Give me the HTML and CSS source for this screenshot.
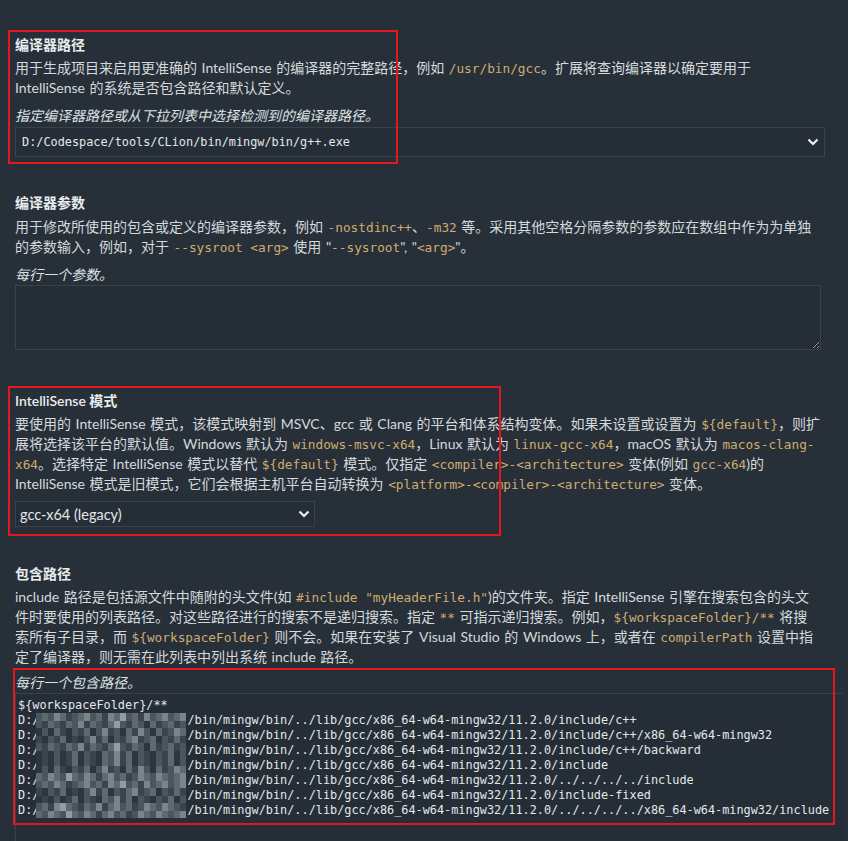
FILE: index.html
```html
<!DOCTYPE html>
<html lang="zh-CN">
<head>
<meta charset="utf-8">
<title>C/C++ 配置</title>
<link rel="stylesheet" href="styles.css">
</head>
<body>
<div class="page">
  <section class="item">
    <div class="title">编译器路径</div>
    <div class="desc">用于生成项目来启用更准确的 IntelliSense 的编译器的完整路径，例如 <code>/usr/bin/gcc</code>。扩展将查询编译器以确定要用于 IntelliSense 的系统是否包含路径和默认定义。</div>
    <div class="hint">指定编译器路径或从下拉列表中选择检测到的编译器路径。</div>
    <div class="select select-wide">
      <span class="mono">D:/Codespace/tools/CLion/bin/mingw/bin/g++.exe</span>
      <svg class="chev" width="12" height="8" viewBox="0 0 12 8"><polyline points="1.5,1.5 6,6 10.5,1.5" fill="none" stroke="#eef1f2" stroke-width="2.2"/></svg>
    </div>
  </section>

  <section class="item">
    <div class="title">编译器参数</div>
    <div class="desc">用于修改所使用的包含或定义的编译器参数，例如 <code>-nostdinc++</code>、<code>-m32</code> 等。采用其他空格分隔参数的参数应在数组中作为为单独的参数输入，例如，对于 <code>--sysroot &lt;arg&gt;</code> 使用 "<code>--sysroot</code>", "<code>&lt;arg&gt;</code>"。</div>
    <div class="hint">每行一个参数。</div>
    <textarea class="args"></textarea>
  </section>

  <section class="item item-after-area">
    <div class="title">IntelliSense 模式</div>
    <div class="desc">要使用的 IntelliSense 模式，该模式映射到 MSVC、gcc 或 Clang 的平台和体系结构变体。如果未设置或设置为 <code>${default}</code>，则扩展将选择该平台的默认值。Windows 默认为 <code>windows-msvc-x64</code>，Linux 默认为 <code>linux-gcc-x64</code>，macOS 默认为 <code>macos-clang-x64</code>。选择特定 IntelliSense 模式以替代 <code>${default}</code> 模式。仅指定 <code>&lt;compiler&gt;-&lt;architecture&gt;</code> 变体(例如 <code>gcc-x64</code>)的 IntelliSense 模式是旧模式，它们会根据主机平台自动转换为 <code>&lt;platform&gt;-&lt;compiler&gt;-&lt;architecture&gt;</code> 变体。</div>
    <div class="select select-small">
      <span>gcc-x64 (legacy)</span>
      <svg class="chev" width="12" height="8" viewBox="0 0 12 8"><polyline points="1.5,1.5 6,6 10.5,1.5" fill="none" stroke="#eef1f2" stroke-width="2.2"/></svg>
    </div>
  </section>

  <section class="item">
    <div class="title">包含路径</div>
    <div class="desc">include 路径是包括源文件中随附的头文件(如 <code>#include "myHeaderFile.h"</code>)的文件夹。指定 IntelliSense 引擎在搜索包含的头文件时要使用的列表路径。对这些路径进行的搜索不是递归搜索。指定 <code>**</code> 可指示递归搜索。例如，<code>${workspaceFolder}/**</code> 将搜索所有子目录，而 <code>${workspaceFolder}</code> 则不会。如果在安装了 Visual Studio 的 Windows 上，或者在 <code>compilerPath</code> 设置中指定了编译器，则无需在此列表中列出系统 include 路径。</div>
    <div class="hint hint-include">每行一个包含路径。</div>
    <div class="paths mono">
      <div class="line">${workspaceFolder}/**</div>
      <div class="line">D:/<span class="blur b1"></span>/bin/mingw/bin/../lib/gcc/x86_64-w64-mingw32/11.2.0/include/c++</div>
      <div class="line">D:/<span class="blur b2"></span>/bin/mingw/bin/../lib/gcc/x86_64-w64-mingw32/11.2.0/include/c++/x86_64-w64-mingw32</div>
      <div class="line">D:/<span class="blur b3"></span>/bin/mingw/bin/../lib/gcc/x86_64-w64-mingw32/11.2.0/include/c++/backward</div>
      <div class="line">D:/<span class="blur b4"></span>/bin/mingw/bin/../lib/gcc/x86_64-w64-mingw32/11.2.0/include</div>
      <div class="line">D:/<span class="blur b5"></span>/bin/mingw/bin/../lib/gcc/x86_64-w64-mingw32/11.2.0/../../../../include</div>
      <div class="line">D:/<span class="blur b6"></span>/bin/mingw/bin/../lib/gcc/x86_64-w64-mingw32/11.2.0/include-fixed</div>
      <div class="line">D:/<span class="blur b7"></span>/bin/mingw/bin/../lib/gcc/x86_64-w64-mingw32/11.2.0/../../../../x86_64-w64-mingw32/include</div>
    </div>
  </section>

  <div class="mark mark-1"></div>
  <div class="mark mark-3"></div>
  <div class="mark mark-4"></div>
</div>
</body>
</html>
```

FILE: styles.css
```css
:root {
  --p0: #2c363e;
  --p1: #3a444c;
  --p2: #4a555c;
  --p3: #5f6a70;
  --p4: #7a858b;
  --p5: #929ca1;
  --g1: linear-gradient(90deg, var(--p2) 0 6px, var(--p3) 6px 12px, var(--p2) 12px 18px, var(--p4) 18px 24px, var(--p3) 24px 30px, var(--p1) 30px 36px, var(--p2) 36px 42px, var(--p3) 42px 48px, var(--p4) 48px 54px, var(--p2) 54px 60px, var(--p3) 60px 66px, var(--p1) 66px 72px, var(--p4) 72px 78px, var(--p3) 78px 84px, var(--p5) 84px 90px, var(--p2) 90px 96px, var(--p3) 96px 102px, var(--p1) 102px 108px, var(--p4) 108px 114px, var(--p2) 114px 120px, var(--p3) 120px 126px, var(--p4) 126px 132px, var(--p2) 132px 138px, var(--p3) 138px 144px, var(--p4) 144px 150px);
  --g2: linear-gradient(90deg, var(--p0) 0 6px, var(--p2) 6px 12px, var(--p0) 12px 18px, var(--p3) 18px 24px, var(--p1) 24px 30px, var(--p0) 30px 36px, var(--p2) 36px 42px, var(--p1) 42px 48px, var(--p3) 48px 54px, var(--p0) 54px 60px, var(--p2) 60px 66px, var(--p4) 66px 72px, var(--p1) 72px 78px, var(--p2) 78px 84px, var(--p0) 84px 90px, var(--p3) 90px 96px, var(--p1) 96px 102px, var(--p4) 102px 108px, var(--p2) 108px 114px, var(--p0) 114px 120px, var(--p3) 120px 126px, var(--p1) 126px 132px, var(--p2) 132px 138px, var(--p4) 138px 144px, var(--p3) 144px 150px);
  --g3: linear-gradient(90deg, var(--p2) 0 6px, var(--p1) 6px 12px, var(--p3) 12px 18px, var(--p2) 18px 24px, var(--p1) 24px 30px, var(--p3) 30px 36px, var(--p2) 36px 42px, var(--p4) 42px 48px, var(--p1) 48px 54px, var(--p3) 54px 60px, var(--p2) 60px 66px, var(--p1) 66px 72px, var(--p3) 72px 78px, var(--p5) 78px 84px, var(--p2) 84px 90px, var(--p1) 90px 96px, var(--p3) 96px 102px, var(--p2) 102px 108px, var(--p0) 108px 114px, var(--p3) 114px 120px, var(--p1) 120px 126px, var(--p2) 126px 132px, var(--p3) 132px 138px, var(--p1) 138px 144px, var(--p2) 144px 150px);
  --g4: linear-gradient(90deg, var(--p0) 0 6px, var(--p1) 6px 12px, var(--p0) 12px 18px, var(--p2) 18px 24px, var(--p0) 24px 30px, var(--p1) 30px 36px, var(--p3) 36px 42px, var(--p0) 42px 48px, var(--p2) 48px 54px, var(--p1) 54px 60px, var(--p0) 60px 66px, var(--p3) 66px 72px, var(--p2) 72px 78px, var(--p4) 78px 84px, var(--p1) 84px 90px, var(--p3) 90px 96px, var(--p0) 96px 102px, var(--p2) 102px 108px, var(--p1) 108px 114px, var(--p0) 114px 120px, var(--p2) 120px 126px, var(--p1) 126px 132px, var(--p3) 132px 138px, var(--p0) 138px 144px, var(--p2) 144px 150px);
  --g5: linear-gradient(90deg, var(--p3) 0 6px, var(--p2) 6px 12px, var(--p4) 12px 18px, var(--p3) 18px 24px, var(--p2) 24px 30px, var(--p5) 30px 36px, var(--p3) 36px 42px, var(--p2) 42px 48px, var(--p4) 48px 54px, var(--p3) 54px 60px, var(--p1) 60px 66px, var(--p3) 66px 72px, var(--p4) 72px 78px, var(--p2) 78px 84px, var(--p3) 84px 90px, var(--p1) 90px 96px, var(--p2) 96px 102px, var(--p4) 102px 108px, var(--p3) 108px 114px, var(--p2) 114px 120px, var(--p4) 120px 126px, var(--p3) 126px 132px, var(--p2) 132px 138px, var(--p3) 138px 144px, var(--p4) 144px 150px);
  --g6: linear-gradient(90deg, var(--p1) 0 6px, var(--p0) 6px 12px, var(--p2) 12px 18px, var(--p1) 18px 24px, var(--p3) 24px 30px, var(--p0) 30px 36px, var(--p1) 36px 42px, var(--p0) 42px 48px, var(--p2) 48px 54px, var(--p4) 54px 60px, var(--p1) 60px 66px, var(--p3) 66px 72px, var(--p0) 72px 78px, var(--p2) 78px 84px, var(--p1) 84px 90px, var(--p3) 90px 96px, var(--p4) 96px 102px, var(--p1) 102px 108px, var(--p2) 108px 114px, var(--p3) 114px 120px, var(--p0) 120px 126px, var(--p2) 126px 132px, var(--p1) 132px 138px, var(--p3) 138px 144px, var(--p1) 144px 150px);
  --g7: linear-gradient(90deg, var(--p2) 0 6px, var(--p3) 6px 12px, var(--p1) 12px 18px, var(--p4) 18px 24px, var(--p5) 24px 30px, var(--p3) 30px 36px, var(--p2) 36px 42px, var(--p1) 42px 48px, var(--p3) 48px 54px, var(--p2) 54px 60px, var(--p4) 60px 66px, var(--p1) 66px 72px, var(--p3) 72px 78px, var(--p4) 78px 84px, var(--p2) 84px 90px, var(--p3) 90px 96px, var(--p1) 96px 102px, var(--p2) 102px 108px, var(--p4) 108px 114px, var(--p3) 114px 120px, var(--p2) 120px 126px, var(--p4) 126px 132px, var(--p3) 132px 138px, var(--p2) 138px 144px, var(--p1) 144px 150px);
}

html, body {
  margin: 0;
  height: 100%;
  overflow: hidden;
  background: #273039;
}

body {
  color: #d5d9db;
  font-family: Lato, "Noto Sans CJK SC", sans-serif;
  font-size: 14px;
  color-scheme: dark;
}

.page {
  position: relative;
  padding: 35px 0 0 15px;
  width: 806px;
}

.item + .item {
  padding-top: 36.6px;
}

.item.item-after-area {
  padding-top: 40.7px;
}

.title {
  line-height: 20px;
  font-weight: 600;
  color: #e9ecee;
}

.desc {
  margin-top: 3.3px;
  line-height: 20px;
  word-spacing: 1px;
}

.hint {
  margin-top: 8px;
  line-height: 20px;
  font-style: italic;
  color: #dde1e3;
}

.hint-include {
  margin-top: 5.7px;
}

code, .mono {
  font-family: "DejaVu Sans Mono", "Liberation Mono", monospace;
}

code {
  font-size: 12.75px;
  line-height: 1;
  word-spacing: 0;
  color: #cfac6f;
}

.select {
  box-sizing: border-box;
  display: flex;
  align-items: center;
  justify-content: space-between;
  border: 1px solid #37424a;
  background: #252e36;
}

.select-wide {
  margin-top: 0.4px;
  width: 810px;
  height: 30px;
  padding: 0 5px 0 6px;
  font-size: 11.85px;
  color: #e4e7e9;
}

.select-small {
  margin-top: 7.4px;
  width: 300px;
  height: 26px;
  padding: 0 4px 0 4px;
  font-size: 14.5px;
  color: #e4e7e9;
}

.chev {
  display: block;
}

.args {
  display: block;
  box-sizing: border-box;
  width: 806px;
  height: 65px;
  margin: 0.3px 0 0;
  padding: 0;
  border: 1px solid #37424a;
  background: #252e36;
  resize: both;
  outline: none;
}

.paths {
  box-sizing: border-box;
  width: 828px;
  height: 170px;
  margin-top: 0.4px;
  padding: 4px 0 0 2px;
  border: 1px solid #37424a;
  border-right: none;
  background: #252e36;
  font-size: 11.85px;
  line-height: 15px;
  color: #e4e7e9;
}

.line {
  white-space: pre;
  height: 15px;
}

.blur {
  display: inline-block;
  width: 150px;
  height: 15px;
  vertical-align: top;
  margin-left: -3px;
  margin-right: 1px;
  background-repeat: no-repeat;
  background-size: 100% 8px, 100% 7px;
  background-position: top, bottom;
}

.b1 { background-image: var(--g1), var(--g3); }
.b2 { background-image: var(--g2), var(--g6); }
.b3 { background-image: var(--g3), var(--g4); }
.b4 { background-image: var(--g4), var(--g2); }
.b5 { background-image: var(--g5), var(--g1); }
.b6 { background-image: var(--g6), var(--g4); }
.b7 { background-image: var(--g7), var(--g5); }

.mark {
  position: absolute;
  box-sizing: border-box;
  border: 2px solid #e5161e;
  pointer-events: none;
}

.mark-1 { left: 8px; top: 30px; width: 390px; height: 134px; }
.mark-3 { left: 8px; top: 386px; width: 493px; height: 150px; }
.mark-4 { left: 13px; top: 668px; width: 822px; height: 157px; }
```
